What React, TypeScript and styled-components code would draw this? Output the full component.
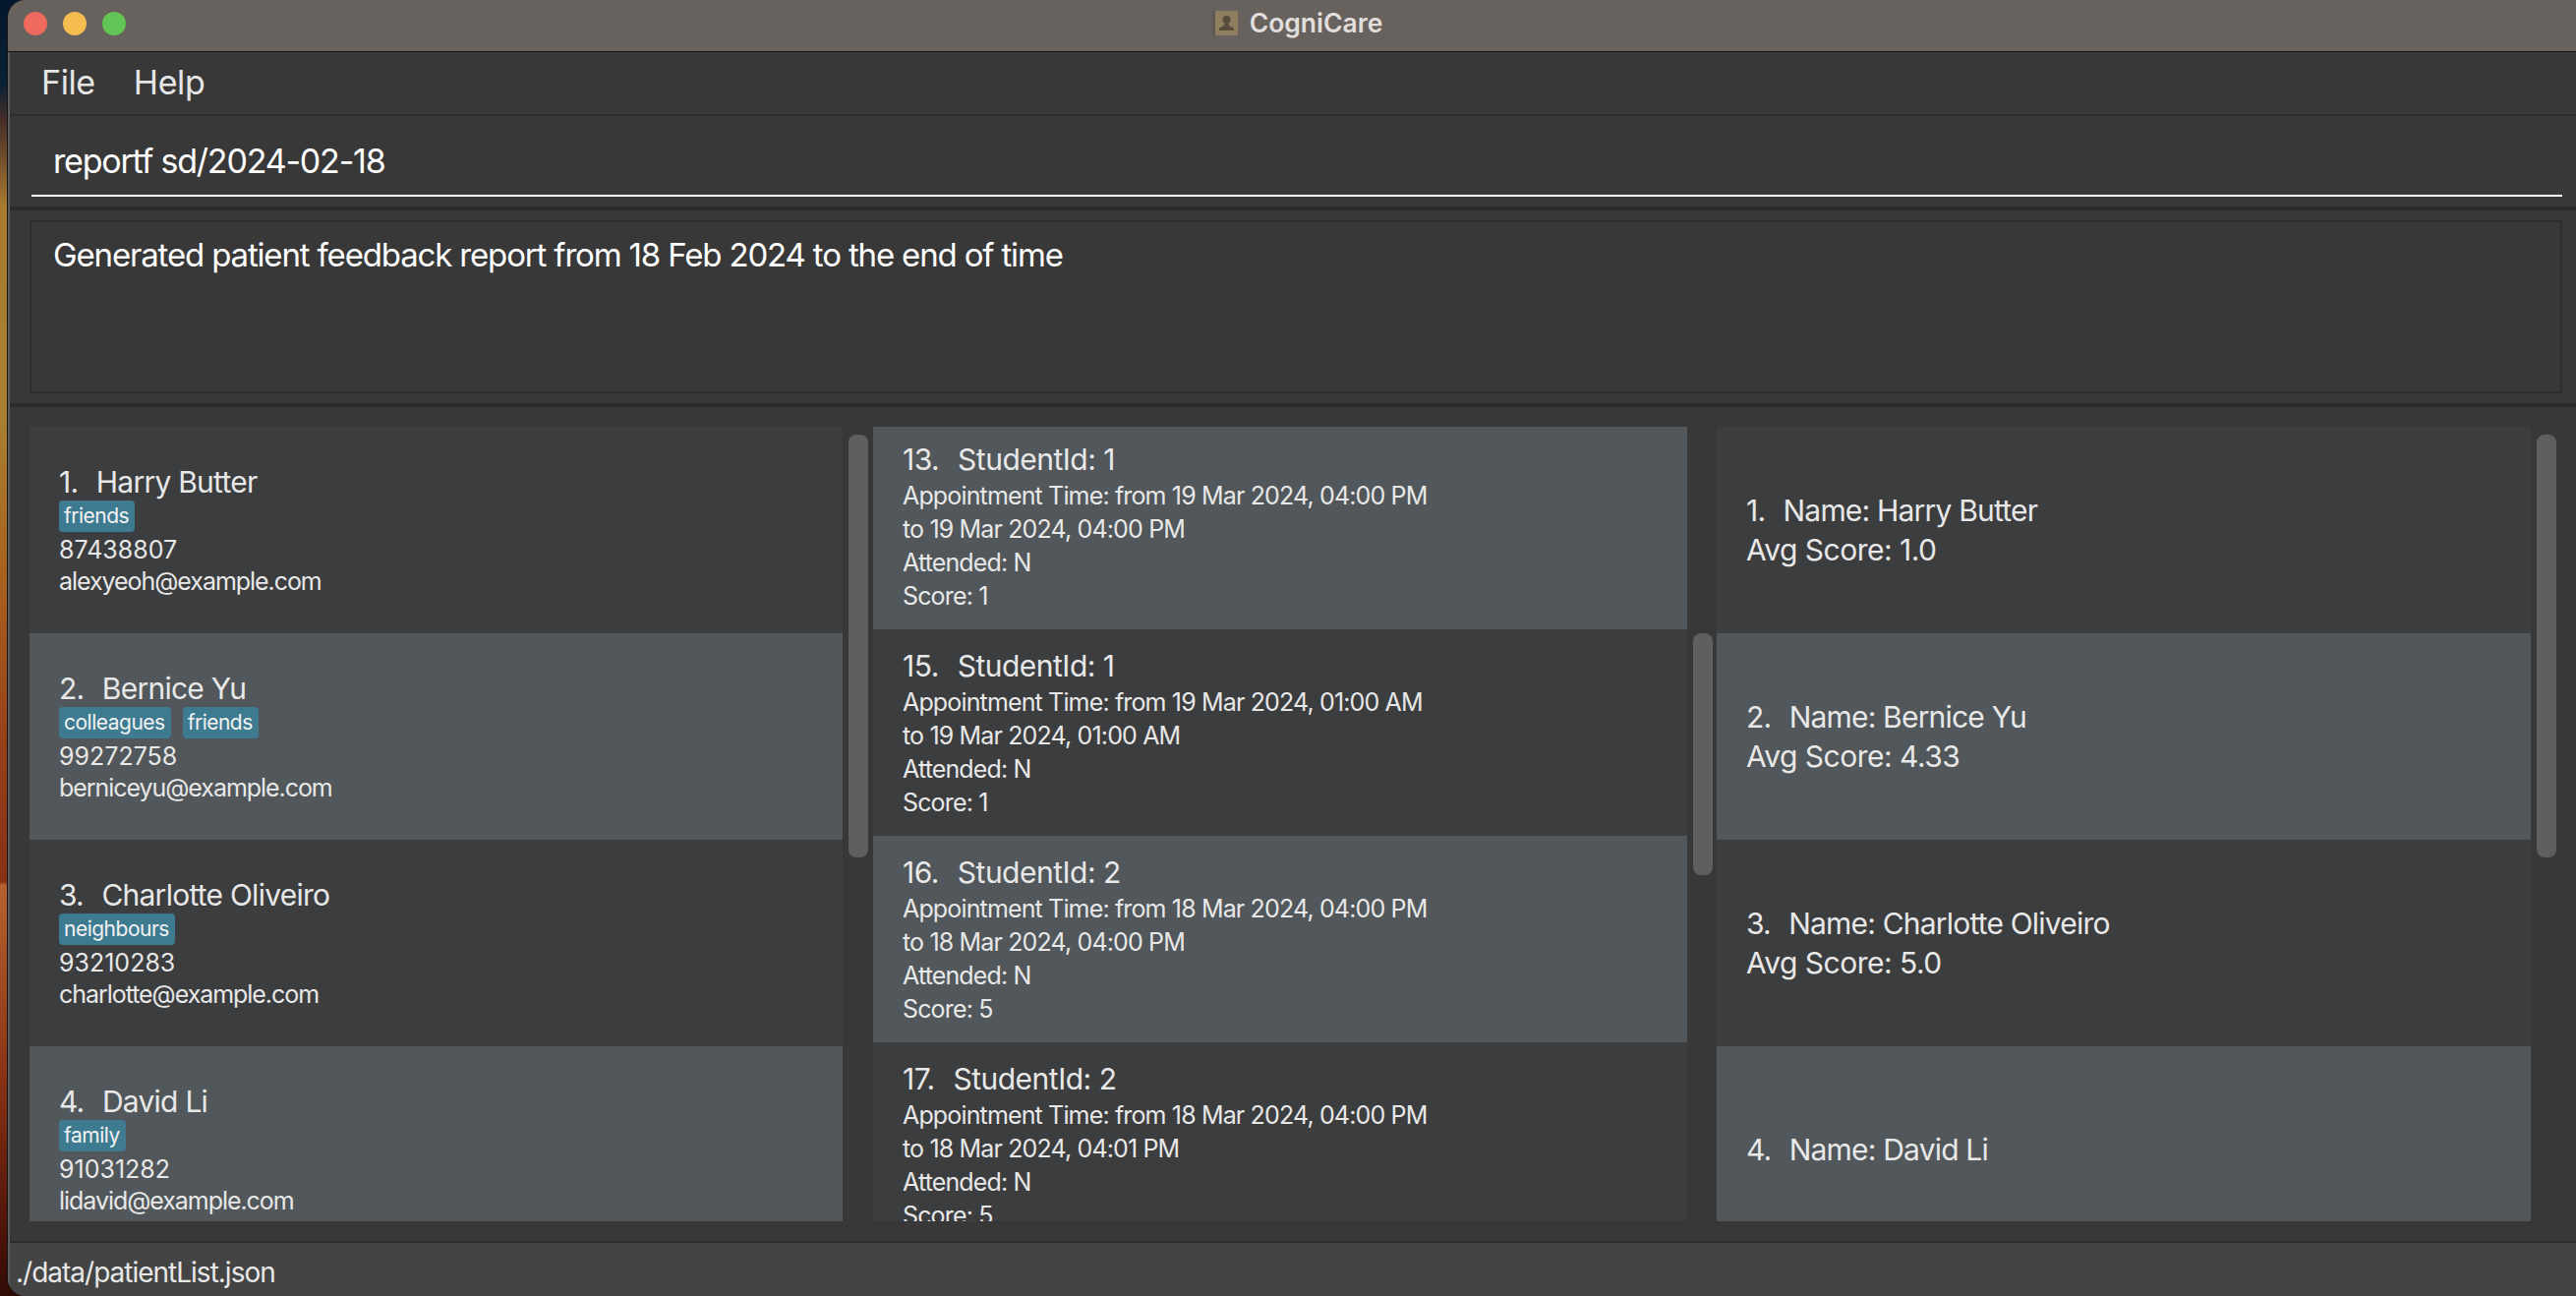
import React from "react";
import styled, { createGlobalStyle } from "styled-components";

const GlobalStyle = createGlobalStyle`
  html, body {
    margin: 0;
    padding: 0;
    height: 100%;
    overflow: hidden;
    background: linear-gradient(180deg, #04182c 0px, #0a2035 84px, #4a3028 126px, #a87a30 210px, #a88030 420px, #a8601f 590px, #96401a 757px, #8a3015 897px, #b5622f 900px, #8a3315 1094px, #4a1208 1262px, #300b06 1318px);
    font-family: Inter, "Noto Sans", "Liberation Sans", sans-serif;
  }
`;

const Window = styled.div`
  margin-left: 8px;
  height: 1318px;
  display: flex;
  flex-direction: column;
  background: #383838;
  border-radius: 18px 0 0 18px;
  overflow: hidden;
  box-shadow: -1px 0 0 #141414;
`;

const TitleBar = styled.div`
  flex: 0 0 52px;
  box-sizing: content-box;
  height: 52px;
  display: grid;
  grid-template-columns: 1fr auto 1fr;
  align-items: center;
  padding: 0 0 0 16px;
  background: #67625e;
  border-bottom: 1px solid #161616;
`;

const Lights = styled.div`
  display: flex;
  gap: 16px;
  margin-bottom: 4px;
`;

const Light = styled.span<{ $color: string }>`
  width: 24px;
  height: 24px;
  border-radius: 50%;
  background: ${(p) => p.$color};
`;

const TitleText = styled.div`
  display: flex;
  align-items: center;
  gap: 12px;
  margin: 0 0 6px -5px;
  font-size: 26.5px;
  font-weight: 600;
  color: #e2dedc;
  white-space: nowrap;
`;

const Body = styled.div`
  flex: 1;
  min-height: 0;
  display: flex;
  flex-direction: column;
  border-left: 2px solid #5c5c5c;
`;

const MenuBar = styled.div`
  flex: 0 0 65px;
  display: flex;
  align-items: center;
  gap: 39px;
  padding: 0 0 3px 32px;
  box-sizing: border-box;
  font-size: 34px;
  letter-spacing: -0.4px;
  color: #e6e6e6;
  border-bottom: 2px solid #2c2c2c;
`;

const CommandZone = styled.div`
  height: 92px;
  padding: 0 14px 0 22px;
  border-bottom: 4px solid #2c2c2c;
`;

const CommandInput = styled.div`
  height: 82px;
  box-sizing: border-box;
  padding: 23px 0 0 22px;
  font-size: 34px;
  line-height: 46px;
  letter-spacing: -1.2px;
  color: #ffffff;
  border-bottom: 2px solid #ffffff;
`;

const ResultZone = styled.div`
  padding: 10px 14px 10px 20px;
  border-bottom: 4px solid #2c2c2c;
`;

const ResultBox = styled.div`
  height: 176px;
  box-sizing: border-box;
  padding: 10px 0 0 22px;
  border: 2px solid #2e2e2e;
  font-size: 33px;
  line-height: 46px;
  letter-spacing: -1.16px;
  color: #ffffff;
`;

const ListZone = styled.div`
  flex: 1;
  min-height: 0;
  display: flex;
  padding: 20px 0 20px 20px;
  border-bottom: 2px solid #2c2c2c;
`;

const Pane = styled.div<{ $width: number; $shift?: number }>`
  flex: 0 0 ${(p) => p.$width}px;
  height: 808px;
  overflow: hidden;
  & > :first-child {
    margin-top: ${(p) => -(p.$shift ?? 0)}px;
  }
`;

const Track = styled.div<{ $width: number }>`
  flex: 0 0 ${(p) => p.$width}px;
  padding-left: 6px;
  box-sizing: border-box;
`;

const Thumb = styled.div<{ $top: number; $height: number }>`
  width: 20px;
  margin-top: ${(p) => p.$top}px;
  height: ${(p) => p.$height}px;
  border-radius: 8px;
  background: #5f5f5f;
`;

const Card = styled.div<{ $alt?: boolean }>`
  height: 210px;
  box-sizing: border-box;
  padding-left: 30px;
  display: flex;
  flex-direction: column;
  justify-content: center;
  background: ${(p) => (p.$alt ? "#51575a" : "#3c3d3f")};
  color: #e8e8e8;
  white-space: pre;
`;

const CardName = styled.div<{ $spacing: number }>`
  font-size: 30px;
  line-height: 40px;
  letter-spacing: ${(p) => p.$spacing}px;
`;

const NameIndex = styled.span`
  margin-right: 3px;
`;

const Tags = styled.div`
  display: flex;
  gap: 12px;
  margin: -1px 0 1px;
`;

const Tag = styled.span`
  height: 32px;
  box-sizing: border-box;
  padding: 0 6px 0 5px;
  border-radius: 4px;
  background: #3e7b91;
  color: #f2f2f2;
  font-size: 21px;
  line-height: 32px;
  letter-spacing: -0.5px;
`;

const CardLine = styled.div<{ $spacing?: number }>`
  font-size: 25px;
  line-height: 34px;
  letter-spacing: ${(p) => p.$spacing ?? -0.85}px;
`;

const EmailLine = styled(CardLine)`
  margin-top: -2px;
`;

const ScoreLine = styled.div`
  font-size: 30px;
  line-height: 40px;
  letter-spacing: -0.5px;
`;

const StatusBar = styled.div`
  flex: 0 0 54px;
  display: flex;
  align-items: center;
  padding: 5px 0 0 6px;
  box-sizing: border-box;
  background: #444444;
  color: #e8e8e8;
  font-size: 28px;
  letter-spacing: -1px;
`;

const AppIcon = () => (
  <svg width="26" height="25" viewBox="0 0 26 25">
    <rect x="0" y="0" width="4" height="25" fill="#5e5853" />
    <rect x="3" y="0" width="23" height="25" rx="1" fill="#8f7f60" />
    <circle cx="14.5" cy="9" r="4" fill="#574d3d" />
    <path d="M12.5 12 L16.5 12 L17 15 L22 17.5 L22 20 L7 20 L7 17.5 L12 15 Z" fill="#574d3d" />
  </svg>
);

const patients = [
  { name: "Harry Butter", tags: ["friends"], phone: "87438807", email: "alexyeoh@example.com" },
  { name: "Bernice Yu", tags: ["colleagues", "friends"], phone: "99272758", email: "berniceyu@example.com" },
  { name: "Charlotte Oliveiro", tags: ["neighbours"], phone: "93210283", email: "charlotte@example.com" },
  { name: "David Li", tags: ["family"], phone: "91031282", email: "lidavid@example.com" },
];

const appointments = [
  { no: 13, id: 1, from: "19 Mar 2024, 04:00 PM", to: "19 Mar 2024, 04:00 PM", score: 1 },
  { no: 15, id: 1, from: "19 Mar 2024, 01:00 AM", to: "19 Mar 2024, 01:00 AM", score: 1 },
  { no: 16, id: 2, from: "18 Mar 2024, 04:00 PM", to: "18 Mar 2024, 04:00 PM", score: 5 },
  { no: 17, id: 2, from: "18 Mar 2024, 04:00 PM", to: "18 Mar 2024, 04:01 PM", score: 5 },
];

const reports = [
  { name: "Harry Butter", avg: "1.0" },
  { name: "Bernice Yu", avg: "4.33" },
  { name: "Charlotte Oliveiro", avg: "5.0" },
  { name: "David Li" },
];

const App: React.FC = () => {
  return (
    <>
      <GlobalStyle />
      <Window>
        <TitleBar>
          <Lights>
            <Light $color="#ee6a5f" />
            <Light $color="#f5bd4f" />
            <Light $color="#61c454" />
          </Lights>
          <TitleText>
            <AppIcon />
            CogniCare
          </TitleText>
        </TitleBar>
        <Body>
          <MenuBar>
            <span>File</span>
            <span>Help</span>
          </MenuBar>
          <CommandZone>
            <CommandInput>reportf sd/2024-02-18</CommandInput>
          </CommandZone>
          <ResultZone>
            <ResultBox>Generated patient feedback report from 18 Feb 2024 to the end of time</ResultBox>
          </ResultZone>
          <ListZone>
            <Pane $width={827}>
              {patients.map((p, i) => (
                <Card key={p.name} $alt={i % 2 === 1}>
                  <CardName $spacing={-0.75}>
                    <NameIndex>{`${i + 1}.  `}</NameIndex>
                    {p.name}
                  </CardName>
                  <Tags>
                    {p.tags.map((t) => (
                      <Tag key={t}>{t}</Tag>
                    ))}
                  </Tags>
                  <CardLine $spacing={0}>{p.phone}</CardLine>
                  <EmailLine $spacing={-1.05}>{p.email}</EmailLine>
                </Card>
              ))}
            </Pane>
            <Track $width={31}>
              <Thumb $top={8} $height={430} />
            </Track>
            <Pane $width={828} $shift={4}>
              {appointments.map((a, i) => (
                <Card key={a.no} $alt={i % 2 === 0}>
                  <CardName $spacing={-0.5}>
                    <NameIndex>{`${a.no}.  `}</NameIndex>
                    {`StudentId: ${a.id}`}
                  </CardName>
                  <CardLine>{`Appointment Time: from ${a.from}`}</CardLine>
                  <CardLine>{`to ${a.to}`}</CardLine>
                  <CardLine>Attended: N</CardLine>
                  <CardLine>{`Score: ${a.score}`}</CardLine>
                </Card>
              ))}
            </Pane>
            <Track $width={30}>
              <Thumb $top={210} $height={246} />
            </Track>
            <Pane $width={828}>
              {reports.map((r, i) => (
                <Card key={r.name} $alt={i % 2 === 1}>
                  <CardName $spacing={-0.8}>
                    <NameIndex>{`${i + 1}.  `}</NameIndex>
                    {`Name: ${r.name}`}
                  </CardName>
                  {r.avg && <ScoreLine>{`Avg Score: ${r.avg}`}</ScoreLine>}
                </Card>
              ))}
            </Pane>
            <Track $width={30}>
              <Thumb $top={8} $height={430} />
            </Track>
          </ListZone>
          <StatusBar>./data/patientList.json</StatusBar>
        </Body>
      </Window>
    </>
  );
};

export default App;
